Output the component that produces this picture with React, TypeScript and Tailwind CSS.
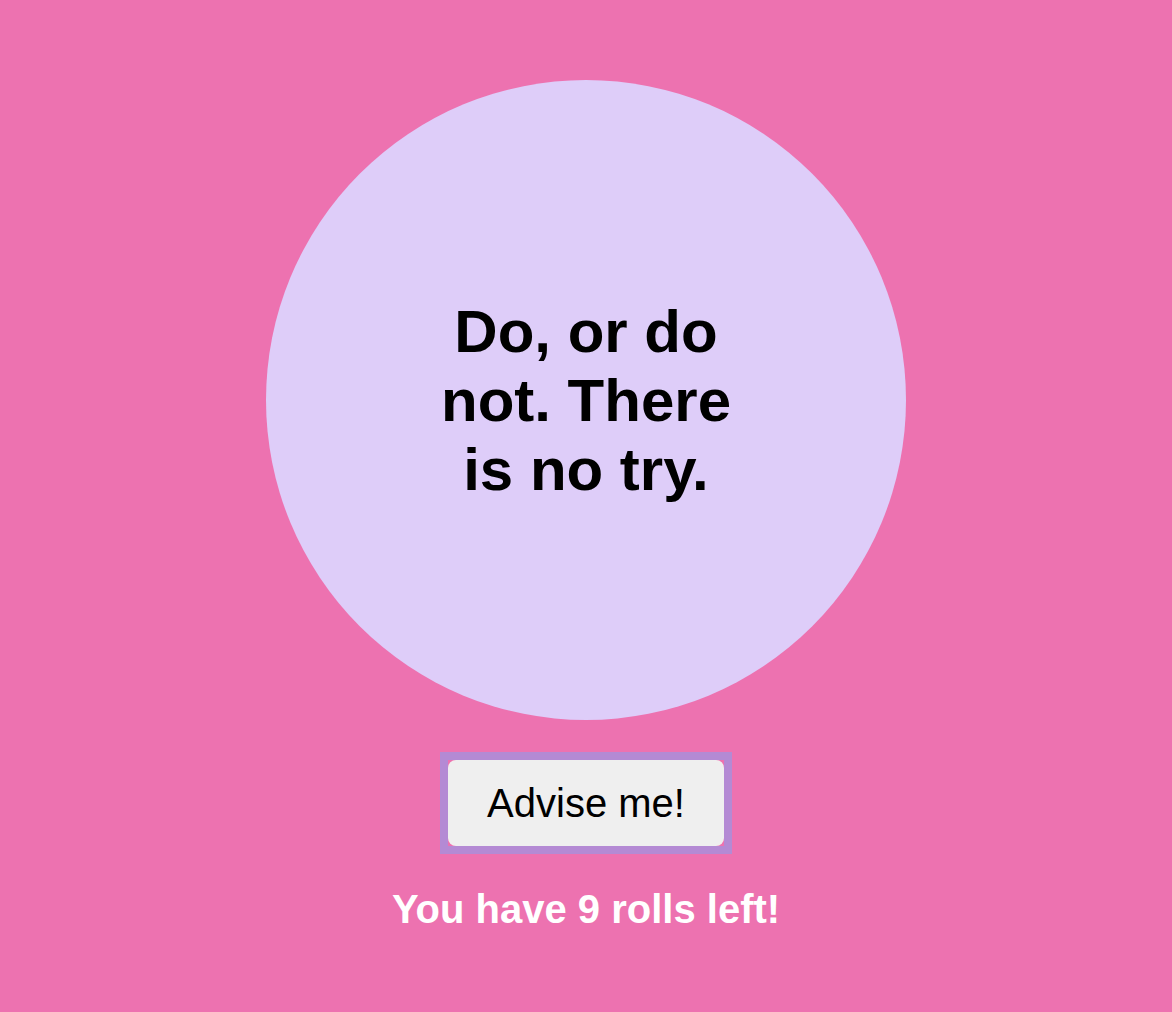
import React from "react";

export default function App() {
  return (
    <div
      className="min-h-screen w-full bg-[#ed72b0] flex flex-col items-center pt-[80px]"
      style={{ fontFamily: '"Liberation Sans", Arial, Helvetica, sans-serif' }}
    >
      <div className="w-[640px] h-[640px] rounded-full bg-[#decdf9] flex items-center justify-center">
        <h1 className="w-[320px] text-center text-[60px] leading-[69px] font-bold text-black">
          Do, or do not. There is no try.
        </h1>
      </div>
      <div className="mt-[32px] border-8 border-[#b48ad4]">
        <button className="w-[276px] h-[86px] rounded-lg bg-[#efefef] text-[40px] leading-[46px] text-black flex items-center justify-center">
          Advise me!
        </button>
      </div>
      <p className="mt-[32px] text-[40px] leading-[46px] font-bold text-white">
        You have 9 rolls left!
      </p>
    </div>
  );
}
